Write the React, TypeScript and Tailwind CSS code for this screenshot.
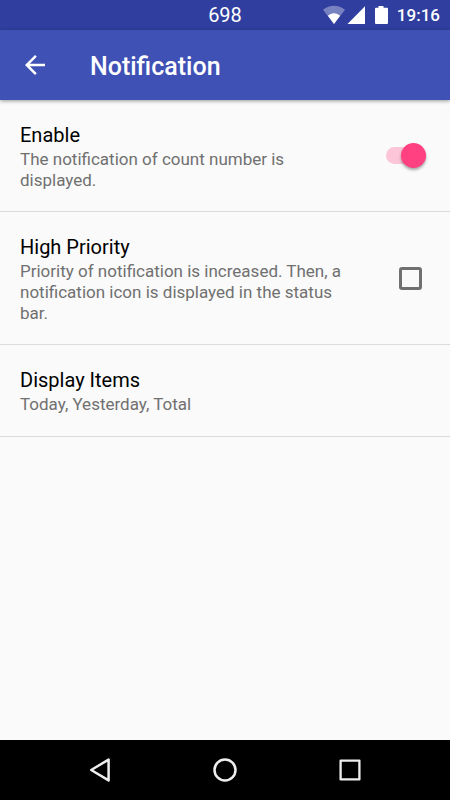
import { useState } from 'react'
import type { ReactNode } from 'react'

interface PreferenceTextProps {
  title: string
  summary: string
}

function PreferenceText({ title, summary }: PreferenceTextProps) {
  return (
    <span className="block min-w-0 flex-1 pt-[3px]">
      <span className="block text-[20px] leading-6 text-black">{title}</span>
      <span className="mt-[2px] block text-[17px] leading-[21px] text-[#707070]">{summary}</span>
    </span>
  )
}

interface TogglePreferenceProps extends PreferenceTextProps {
  id: string
  children: ReactNode
}

function TogglePreference({ id, title, summary, children }: TogglePreferenceProps) {
  return (
    <li className="border-b border-[#dcdcdc]">
      <label htmlFor={id} className="flex cursor-pointer items-center py-5 pr-6 pl-5">
        <PreferenceText title={title} summary={summary} />
        <span className="flex w-[72px] shrink-0 justify-end">{children}</span>
      </label>
    </li>
  )
}

function StatusBar() {
  return (
    <div className="grid h-[30px] grid-cols-[1fr_auto_1fr] items-center bg-[#303f9f] text-white">
      <span className="col-start-2 text-[20px] leading-[30px]">698</span>
      <div className="flex items-center justify-end pr-[10px]">
        <svg width="74" height="30" viewBox="0 0 74 30" fill="#fff" aria-hidden="true">
          <path d="M0 9.8C6.5 4.4 15.5 4.4 22 9.8L11 24Z" opacity=".35" />
          <path d="M4.9 15.8C8.5 12.4 13.5 12.4 17.1 15.8L11 24Z" />
          <path d="M42 6.2V24H24.5Z" />
          <path d="M55.5 6h5v1.8H64q1 0 1 1V23q0 1-1 1H53q-1 0-1-1V8.8q0-1 1-1h2.5Z" />
        </svg>
        <span className="text-[17px] leading-[30px] font-medium">19:16</span>
      </div>
    </div>
  )
}

function AppBar() {
  return (
    <header className="relative flex h-[70px] items-center bg-[#3f51b5] text-white shadow-[0_1px_4px_rgba(0,0,0,0.4)]">
      <button type="button" aria-label="Back" className="flex h-[70px] w-[70px] items-center justify-center">
        <svg width="30" height="30" viewBox="0 0 24 24" fill="currentColor" aria-hidden="true">
          <path d="M20 11H7.83l5.59-5.59L12 4l-8 8 8 8 1.41-1.41L7.83 13H20v-2z" />
        </svg>
      </button>
      <h1 className="ml-5 pt-[3px] text-[25px] leading-8 font-medium">Notification</h1>
    </header>
  )
}

function NavigationBar() {
  return (
    <nav className="flex h-[60px] items-center justify-center gap-[65px] bg-black text-[#eeeeee]">
      <button type="button" aria-label="Back" className="flex h-[60px] w-[60px] items-center justify-center">
        <svg width="30" height="30" viewBox="0 0 30 30" fill="none" stroke="currentColor" strokeWidth="2.5" strokeLinejoin="round" aria-hidden="true">
          <path d="M23.6 4.6V25.4L6.2 15Z" />
        </svg>
      </button>
      <button type="button" aria-label="Home" className="flex h-[60px] w-[60px] items-center justify-center">
        <svg width="30" height="30" viewBox="0 0 30 30" fill="none" stroke="currentColor" strokeWidth="2.5" aria-hidden="true">
          <circle cx="15" cy="15" r="10.5" />
        </svg>
      </button>
      <button type="button" aria-label="Recent apps" className="flex h-[60px] w-[60px] items-center justify-center">
        <svg width="30" height="30" viewBox="0 0 30 30" fill="none" stroke="currentColor" strokeWidth="2.3" strokeLinejoin="round" aria-hidden="true">
          <rect x="5.6" y="5.6" width="18.8" height="18.8" />
        </svg>
      </button>
    </nav>
  )
}

export default function App() {
  const [enabled, setEnabled] = useState(true)
  const [highPriority, setHighPriority] = useState(false)

  return (
    <div className="flex min-h-screen flex-col bg-[#fafafa] font-[Roboto,sans-serif]">
      <StatusBar />
      <AppBar />

      <main className="flex-1">
        <ul>
          <TogglePreference
            id="enable"
            title="Enable"
            summary="The notification of count number is displayed."
          >
            <input
              id="enable"
              type="checkbox"
              role="switch"
              checked={enabled}
              onChange={(e) => setEnabled(e.target.checked)}
              className="peer sr-only"
            />
            <span className="flex h-[17px] w-10 items-center rounded-full bg-[#bdbdbd] peer-checked:justify-end peer-checked:bg-[#fcc6d8] peer-checked:[&>span]:bg-[#ff4081]">
              <span className="h-[25px] w-[25px] rounded-full bg-white shadow-[0_2px_3px_rgba(0,0,0,0.35)]" />
            </span>
          </TogglePreference>

          <TogglePreference
            id="high-priority"
            title="High Priority"
            summary="Priority of notification is increased. Then, a notification icon is displayed in the status bar."
          >
            <input
              id="high-priority"
              type="checkbox"
              checked={highPriority}
              onChange={(e) => setHighPriority(e.target.checked)}
              className="mr-1 h-[23px] w-[23px] appearance-none rounded-[3px] border-[3px] border-[#707070] checked:border-[#ff4081] checked:bg-[#ff4081]"
            />
          </TogglePreference>

          <li className="border-b border-[#dcdcdc]">
            <button type="button" className="flex min-h-[91px] w-full items-start px-5 py-5 text-left">
              <PreferenceText title="Display Items" summary="Today, Yesterday, Total" />
            </button>
          </li>
        </ul>
      </main>

      <NavigationBar />
    </div>
  )
}
